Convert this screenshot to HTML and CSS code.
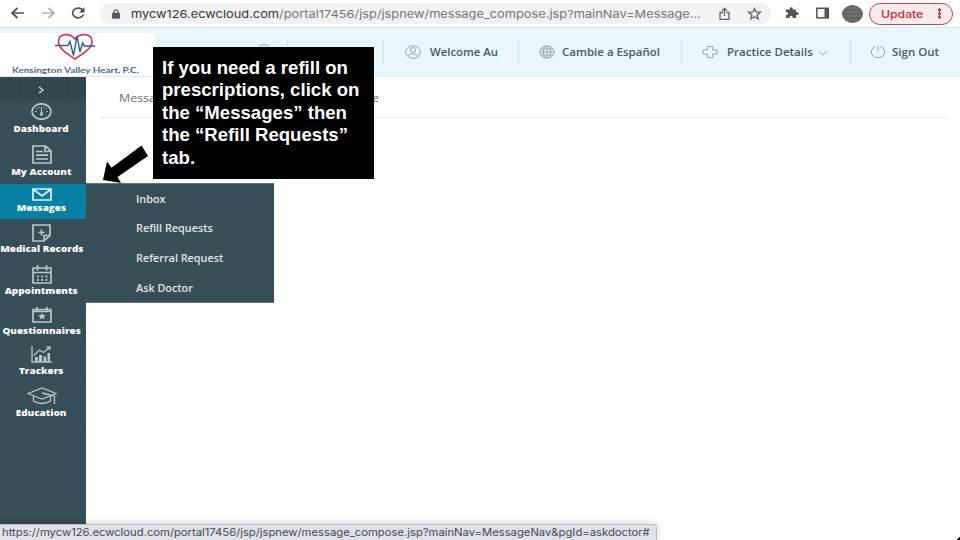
FILE: index.html
```html
<!DOCTYPE html>
<html lang="en">
<head>
<meta charset="utf-8">
<title>Patient Portal</title>
<link rel="stylesheet" href="styles.css">
</head>
<body>
<div class="screen">
  <div class="browser-bar">
    <svg class="nav-buttons" viewBox="0 0 100 27" fill="none" stroke="#4e5256" stroke-width="1.7">
      <path d="M24 13H12.5M17.5 8L12 13l5.500 5"/>
      <path d="M42 13h11.500M48.500 8l5.500 5-5.500 5" stroke="#b0b2b4"/>
      <path d="M83 10.500a5.600 4.800 0 1 0 .500 4"/><path d="M84.500 7v5.500h-5.500z" fill="#4e5256" stroke="none"/>
    </svg>
    <div class="address">
      <svg class="lock" viewBox="0 0 8 10"><path d="M2 4V2.800a2 2 0 0 1 4 0V4" fill="none" stroke="#55585c" stroke-width="1.200"/><rect y="3.800" width="8" height="6" rx="1" fill="#55585c"/></svg>
      <span class="url"><b>mycw126.ecwcloud.com</b>/portal17456/jsp/jspnew/message_compose.jsp?mainNav=Message...</span>
      <svg class="page-actions" viewBox="0 0 50 16" fill="none" stroke="#606367" stroke-width="1.300">
        <path d="M4 6.500H1v6.800h9V6.500H7.500M5.500 10V2.500M3 4.800l2.500-2.500L8 4.800"/>
        <path d="M35.500 2.500l1.600 3.500 4.300.300-3.300 2.600 1.100 3.900-3.700-2.100-3.700 2.100 1.100-3.900-3.300-2.600 4.300-.300z"/>
      </svg>
    </div>
    <svg class="extensions" viewBox="0 0 71 27">
      <path d="M16 9.500h3q-.800-2.200 1.300-2.200t1.300 2.200h3.400v2.800q2.700-.500 2.700 1.300t-2.700 1.400v3h-3.300q.100-2.200-1.600-2.200t-1.600 2.200H15v-3q2.100 0 2.100-1.500T15 12.200V9.500z" fill="#53565a"/>
      <rect x="45.800" y="8.300" width="11.500" height="9.500" fill="none" stroke="#505357" stroke-width="1.500"/><path d="M53.500 8h4v10h-4z" fill="#505357"/>
    </svg>
    <div class="avatar"></div>
    <div class="update"><span>Update</span><i></i></div>
  </div>

  <header class="portal-header">
    <div class="logo">
      <svg viewBox="0 0 40 28" fill="none">
        <path d="M20 26C13 21 3.500 16 3.500 8.500 3.500 0 15.500-.500 20 6c4.500-6.500 17-6 17 2.500C37 16 27 21 20 26z" stroke="#d83a5a" stroke-width="1.700"/>
        <path d="M0 12.500h13l2-4 3.500 14L22 3l3 16 2.500-9 2 3H40" stroke="#2d5e91" stroke-width="1.400"/>
      </svg>
      <span>Kensington Valley Heart, P.C.</span>
    </div>
    <nav class="top-nav">
      <div class="top-item help"><svg viewBox="0 0 16 14"><ellipse cx="8" cy="7" rx="7" ry="6.300"/></svg></div>
      <div class="top-item"></div>
      <div class="top-item welcome"><svg viewBox="0 0 16 14"><ellipse cx="8" cy="7" rx="7.300" ry="6.300"/><ellipse cx="8" cy="5" rx="2.600" ry="2.400"/><path d="M3 11.500C4 8 12 8 13 11.500"/></svg><span>Welcome Au</span></div>
      <div class="top-item language"><svg viewBox="0 0 16 14"><ellipse cx="8" cy="7" rx="7.300" ry="6"/><ellipse cx="8" cy="7" rx="3.700" ry="6"/><path d="M8 1v12M1 7h14M2 4h12M2 10h12"/></svg><span>Cambie a Español</span></div>
      <div class="top-item practice"><svg viewBox="0 0 16 14"><path d="M5.500 1.500h5v3.500H15v4.200h-4.500v3.500h-5V9.200H1V5h4.500z"/></svg><span>Practice Details</span><svg class="caret" viewBox="0 0 8 5"><path d="M.500.500L4 4 7.500.500"/></svg></div>
      <div class="top-item signout"><svg viewBox="0 0 16 14"><path d="M5.500 1.500a6.700 5.800 0 1 0 5 0M8 .500v6"/></svg><span>Sign Out</span></div>
    </nav>
  </header>

  <div class="body">
    <aside class="sidebar">
      <div class="toggle"><svg viewBox="0 0 6 8"><path d="M1 1l4 3-4 3" fill="none" stroke="#d5dcdf" stroke-width="1.300"/></svg></div>
      <a class="item dashboard"><svg viewBox="0 0 21 17"><ellipse cx="10.500" cy="8.500" rx="9.500" ry="7.700"/><path d="M10.500 4v6M4 8.500h1.500M15.500 8.500H17M5.500 4.800l1 1M15.500 4.800l-1 1M8 3.800v1M13 3.800v1" stroke-width="1"/><path d="M9.500 9h2l.500 3.500H9z" class="solid"/></svg><span>Dashboard</span></a>
      <a class="item account"><svg viewBox="0 0 20 19"><path d="M1 1h12.500L19 6v12H1zM13 1v5.500h6M4 6.500h7M4 10.200h12M4 14h12"/></svg><span>My Account</span></a>
      <a class="item messages"><svg viewBox="0 0 20 13"><path d="M1 1h18v11H1zM1.500 1.500L10 8l8.500-6.500"/></svg><span>Messages</span></a>
      <a class="item records"><svg viewBox="0 0 19 18"><path d="M1 1h17v10.500L12 17H1zM18 11.500h-6V17M9.500 5.500v6M6.500 8.500h6"/></svg><span>Medical Records</span></a>
      <a class="item appointments"><svg viewBox="0 0 20 19"><path d="M1 3h18v15H1zM1 7.500h18M5.500 0v5.500M14.500 0v5.500"/><path d="M5 11.500h11M5 15h11" stroke-dasharray="1.800 2.500" stroke-width="1.800"/></svg><span>Appointments</span></a>
      <a class="item questionnaires"><svg viewBox="0 0 20 16"><path d="M1 2.500h18V15H1zM1 4.500h18M5 0v4M15 0v4"/><path class="solid" d="M10 6l1.200 2 2.600.300-1.900 1.600.600 2.500L10 11.200l-2.500 1.200.600-2.500-1.900-1.600L8.800 8z"/></svg><span>Questionnaires</span></a>
      <a class="item trackers"><svg viewBox="0 0 21 17"><path d="M1 0v16h20M2.500 9.500L8.500 4l4 2.500L19 1M15.500 1H19v3" stroke-width="1.300"/><path class="solid" d="M4 11h3v4.500H4zM8 9h3v6.500H8zM12.500 10.500h2.700v5h-2.700zM16.500 7H19v8.500h-2.500z"/></svg><span>Trackers</span></a>
      <a class="item education"><svg viewBox="0 0 30 18"><path d="M1 6.500L15 1l14 5.500L15 12zM6.500 9v5q8.500 5 17 0V9M15 6l12.500 3v8"/></svg><span>Education</span></a>
    </aside>
    <main class="content">
      <div class="breadcrumb"><span>Messages</span><span class="current">Compose</span></div>
      <div class="submenu">
        <a><span>Inbox</span></a><a><span>Refill Requests</span></a><a><span>Referral Request</span></a><a><span>Ask Doctor</span></a>
      </div>
    </main>
  </div>

  <div class="callout">If you need a refill on prescriptions, click on the “Messages” then the “Refill Requests” tab.</div>
  <svg class="arrow" viewBox="0 0 46 40"><path d="M0 35L4 16.500l4.500 6.200L38.500.500 45 11 14.500 32l3.500 6z"/></svg>
  <div class="status"><span>https://mycw126.ecwcloud.com/portal17456/jsp/jspnew/message_compose.jsp?mainNav=MessageNav&amp;pgId=askdoctor#</span></div>
  <div class="corner"></div>
</div>
</body>
</html>
```
FILE: styles.css
```css
* { box-sizing: border-box; }
body { margin: 0; font-family: "Open Sans", sans-serif; background: #fff; }
svg { display: block; flex: none; }
span { white-space: nowrap; }
.screen { position: relative; width: 960px; height: 540px; overflow: hidden; display: flex; flex-direction: column; }

.browser-bar { height: 27px; flex: none; display: flex; align-items: center; font-family: Inter, sans-serif; }
.nav-buttons { width: 100px; height: 27px; }
.address { width: 671px; height: 21px; border-radius: 11px; background: #f1f2f4; display: flex; align-items: center; }
.lock { width: 8px; height: 10px; margin-left: 12px; }
.url { width: 588px; margin-left: 11px; font-size: 11px; line-height: 20px; color: #727579; transform-origin: left center; transform: scaleX(1.165); }
.url b { font-weight: 400; color: #33363a; }
.page-actions { width: 50px; height: 16px; }
.extensions { width: 71px; height: 27px; }
.avatar { width: 21px; height: 18px; border-radius: 50%; background: repeating-linear-gradient(#656565 0 2px, #6e6e6e 2px 4px); }
.update { width: 84px; height: 22px; margin-left: 6px; border: 1.5px solid #b84a52; border-radius: 11px; background: #fcebed; color: #bd3039; display: flex; align-items: center; font-size: 11px; font-weight: 500; }
.update span { margin-left: 11px; transform-origin: left; transform: scaleX(1.11); }
.update i { width: 3px; height: 11px; margin-left: auto; margin-right: 11px; background: radial-gradient(circle, #bd3039 1.4px, transparent 1.6px) 0 0 / 3px 3.7px; }

.portal-header { height: 50px; flex: none; display: flex; background: #e9f7fd; border-top: 1px solid #d9e3e7; border-bottom: 1px solid #e2ecef; }
.logo { width: 155px; margin-top: 5px; background: #fff; display: flex; flex-direction: column; }
.logo svg { width: 40px; height: 28px; margin-left: 55px; }
.logo span { font-family: Lato, sans-serif; font-weight: 700; font-size: 8px; line-height: 10px; margin: 4px 0 0 12px; color: #44699a; transform-origin: left; transform: scaleX(1.24); }
.top-nav { flex: 1; display: grid; grid-template-columns: 133px 96px 135px 163px 169px 1fr; padding-top: 12px; }
.top-item { height: 24px; display: flex; align-items: center; border-right: 1px solid #d3dfe3; }
.top-item:last-child { border: 0; }
.top-item svg { width: 16px; height: 14px; fill: none; stroke: #9aa5a9; stroke-width: 1; }
.top-item span { font-size: 11px; font-weight: 600; line-height: 15px; padding-bottom: 1px; color: #4b5960; transform-origin: left; transform: scaleX(1.045); }
.help svg { margin-left: 101px; margin-bottom: 2px; }
.welcome { padding-left: 21px; gap: 9px; }
.top-item.welcome span { transform: scaleX(1.03); }
.language { padding-left: 20px; gap: 7px; }
.practice { padding-left: 20px; gap: 9px; }
.practice span { width: 93px; }
.top-item svg.caret { width: 8px; height: 5px; margin-top: 3px; margin-left: -10px; }
.signout { padding-left: 19px; gap: 6px; }

.body { flex: 1; display: flex; }
.sidebar { width: 86px; height: 463px; flex: none; background: #364e57; display: flex; flex-direction: column; }
.toggle { height: 23px; flex: none; display: flex; align-items: center; justify-content: center; padding-top: 3px; background: repeating-linear-gradient(90deg, #2c424b 0 1px, #344b54 1px 3px); }
.toggle svg { width: 6px; height: 8px; margin-right: 4px; }
.item { flex: none; display: flex; flex-direction: column; justify-content: flex-end; align-items: center; padding: 0 3px 5px 0; border-bottom: 1px solid #2f464f; }
.item svg { fill: none; stroke: #b8c8cf; stroke-width: 1.7; }
.item .solid { fill: #b8c8cf; stroke: none; }
.item span { font-size: 9px; font-weight: 800; line-height: 12px; color: #fff; transform: scaleX(1.1); }
.dashboard { height: 41px; }
.dashboard svg { width: 21px; height: 17px; margin-bottom: 3px; }
.account { height: 43px; }
.account svg { width: 20px; height: 19px; margin-bottom: 2px; }
.messages { height: 35px; padding-bottom: 4px; background: #0880a3; border-color: #0880a3; }
.item.messages svg { width: 20px; height: 13px; margin-bottom: 1px; stroke: #e3f0f4; }
.records { height: 42px; }
.records svg { width: 19px; height: 18px; margin-bottom: 1px; }
.appointments { height: 42px; }
.appointments svg { width: 20px; height: 19px; margin-bottom: 1px; }
.questionnaires { height: 40px; }
.questionnaires svg { width: 20px; height: 16px; margin-bottom: 2px; }
.trackers { height: 40px; }
.trackers svg { width: 21px; height: 17px; margin-bottom: 2px; }
.education { height: 42px; }
.item.education svg { width: 30px; height: 18px; margin-bottom: 2px; stroke-width: 1.3; }

.content { flex: 1; }
.breadcrumb { height: 41px; margin: 0 13px 0 14px; padding-left: 19px; display: flex; align-items: center; border-bottom: 1px solid #ebebeb; font-size: 11px; color: #6b6b6b; }
.breadcrumb span { width: 90px; transform-origin: left; transform: scaleX(1.13); }
.breadcrumb .current { width: 170px; text-align: right; transform: none; }
.submenu { width: 188px; margin-top: 65px; border-top: 1px solid #62757c; background: #364e57; border-bottom: 1px solid #62757c; }
.submenu a { height: 29.5px; padding: 1px 0 0 50px; display: flex; align-items: center; border-bottom: 1px solid #2f464f; }
.submenu a:last-child { border: 0; }
.submenu span { font-size: 10.5px; font-weight: 600; color: #e1e6e8; transform-origin: left; transform: scaleX(1.03); }

.callout { position: absolute; left: 153px; top: 47px; width: 221px; height: 132px; padding: 10px 9px; background: #000; color: #fff; font: 700 18.6px/22.4px "Liberation Sans", sans-serif; }
.arrow { position: absolute; left: 103px; top: 145px; width: 46px; height: 40px; }
.status { position: absolute; left: 0; top: 524px; width: 657px; height: 16px; padding-left: 2px; border: 1px solid #b9bbc1; border-width: 1px 1px 0 0; border-radius: 0 4px 0 0; background: #dfe2e9; box-shadow: 0 0 9px rgba(0, 0, 0, .2); font: 10px/15px Inter, sans-serif; color: #46494e; }
.status span { display: inline-block; transform-origin: left center; transform: scaleX(1.125); }
.corner { position: absolute; right: 0; bottom: 0; width: 3px; height: 3px; background: linear-gradient(135deg, transparent 50%, #000 50%); }
```
